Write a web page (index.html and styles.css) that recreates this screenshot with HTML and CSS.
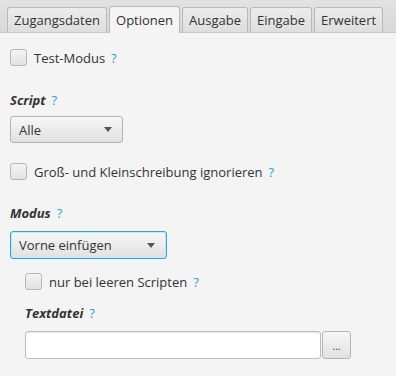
FILE: index.html
```html
<!DOCTYPE html>
<html>
<head>
<meta charset="utf-8">
<link rel="stylesheet" href="styles.css">
</head>
<body>
<div class="tabs">
  <div class="tab">Zugangsdaten</div>
  <div class="tab active">Optionen</div>
  <div class="tab">Ausgabe</div>
  <div class="tab">Eingabe</div>
  <div class="tab">Erweitert</div>
</div>
<div class="content">
  <div class="check r1"><span class="box"></span><span>Test-Modus</span><span class="help">?</span></div>
  <div class="label r2"><b>Script</b><span class="help">?</span></div>
  <div class="combo r3"><span>Alle</span><span class="arrow"></span></div>
  <div class="check r4"><span class="box"></span><span>Groß- und Kleinschreibung ignorieren</span><span class="help">?</span></div>
  <div class="label r5"><b>Modus</b><span class="help">?</span></div>
  <div class="combo focus r6"><span>Vorne einfügen</span><span class="arrow"></span></div>
  <div class="sub">
    <div class="check r7"><span class="box"></span><span>nur bei leeren Scripten</span><span class="help">?</span></div>
    <div class="label r8"><b>Textdatei</b><span class="help">?</span></div>
    <div class="filerow r9"><div class="field"></div><div class="btn">...</div></div>
  </div>
</div>
</body>
</html>
```
FILE: styles.css
```css
html, body { margin: 0; padding: 0; }
body {
  width: 396px; height: 376px; overflow: hidden;
  background: #f4f4f4;
  font-family: "Open Sans", "Noto Sans", sans-serif;
  font-size: 13px;
  color: #333;
}
.tabs {
  height: 33px;
  box-sizing: border-box;
  background: linear-gradient(#e2e2e2, #d8d8d8);
  border-bottom: 1px solid #c8c8c8;
  display: flex;
  align-items: flex-end;
  padding-left: 7px;
  gap: 2px;
}
.tab {
  height: 25px;
  box-sizing: border-box;
  border: 1px solid #b9b9b9;
  border-bottom: none;
  border-radius: 3px 3px 0 0;
  background: linear-gradient(#ececec, #dedede);
  padding: 0 6px;
  line-height: 24px;
  color: #333;
}
.tab.active {
  height: 27px;
  margin-bottom: -1px;
  background: #f4f4f4;
  line-height: 26px;
}
.content { padding-left: 10px; display: flex; flex-direction: column; align-items: flex-start; }
.check { display: flex; align-items: center; height: 17px; }
.box {
  width: 17px; height: 17px; box-sizing: border-box;
  border: 1px solid #b7b7b7; border-radius: 3px;
  background: linear-gradient(#f4f4f4, #e2e2e2);
  margin-right: 7px;
}
.help { color: #2a9fd6; margin-left: 6px; }
.label { height: 17px; line-height: 17px; display: flex; }
.label b { font-style: italic; font-weight: 700; color: #333; }
.combo {
  box-sizing: border-box;
  display: flex; align-items: center; justify-content: space-between;
  border: 1px solid #b5b5b5; border-radius: 3px;
  background: linear-gradient(#f7f7f7, #e1e1e1);
  padding: 0 10px 0 8px;
}
.arrow {
  width: 0; height: 0;
  border-left: 4px solid transparent; border-right: 4px solid transparent;
  border-top: 5px solid #555;
}
.r1 { margin-top: 16px; }
.r2 { margin-top: 26px; }
.r3 { margin-top: 7px; width: 113px; height: 27px; }
.r4 { margin-top: 20px; }
.r5 { margin-top: 25px; }
.r6 { margin-top: 9px; width: 157px; height: 28px; }
.combo.focus {
  border: 1px solid #2fa3d8;
  box-shadow: inset 0 0 0 1px #c4e6f5;
  padding-right: 11px;
}
.sub { padding-left: 15px; display: flex; flex-direction: column; align-items: flex-start; }
.r7 { margin-top: 14px; }
.r8 { margin-top: 15px; }
.r9 { margin-top: 9px; }
.filerow { display: flex; gap: 1px; }
.field {
  width: 296px; height: 28px; box-sizing: border-box;
  border: 1px solid #bdbdbd; border-radius: 3px;
  background: #fff;
  box-shadow: inset 0 2px 2px -1px #e6e6e6;
}
.btn {
  width: 29px; height: 28px; box-sizing: border-box;
  border: 1px solid #b5b5b5; border-radius: 3px;
  background: linear-gradient(#f7f7f7, #e1e1e1);
  font-size: 10px; line-height: 28px; text-align: center; color: #333;
}
```
